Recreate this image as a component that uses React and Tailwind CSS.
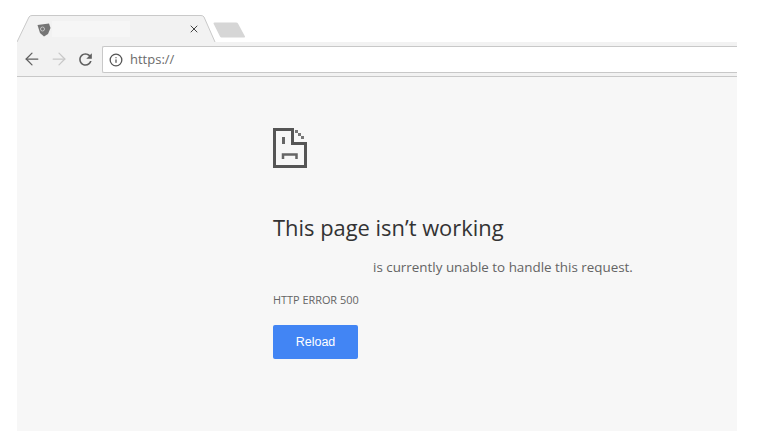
import { ArrowLeft, ArrowRight, Info, X } from 'lucide-react'

const Tabs = () => {
  return (
    <div className="relative h-[42px]">
      {/* Tab outline */}
      <svg className="absolute left-0 top-[14px]" width="200" height="29" viewBox="0 0 200 29" fill="none">
        <path d="M0 28 L12 3 Q13 1.5 15 1.5 L184 1.5 Q186 1.5 187 3 L198 28 Z" fill="#f2f2f2" />
        <path d="M0 28 L12 3 Q13 1.5 15 1.5 L184 1.5 Q186 1.5 187 3 L198 28" stroke="#c9c9c9" />
      </svg>
      {/* Favicon */}
      <svg className="absolute left-[20px] top-[23px]" width="14" height="14" viewBox="0 0 14 14">
        <path d="M0.5 2 L12 0.5 L13.5 5 L11 11 L7 13.5 L3 10 Z" fill="#757575" />
        <circle cx="5.5" cy="6" r="2" fill="none" stroke="#c4c4c4" />
      </svg>
      <div className="absolute left-[35px] top-[21px] h-[16px] w-[78px] bg-[#f6f6f6]"></div>
      <X className="absolute left-[171px] top-[23px] h-[12px] w-[12px] text-[#444444]" strokeWidth={2} />
      {/* New tab button */}
      <svg className="absolute left-[196px] top-[22px]" width="33" height="16" viewBox="0 0 33 16">
        <path d="M0.5 1.5 Q0.5 0.5 1.5 0.5 L23 0.5 Q24.5 0.5 25 1.5 L32 14.5 Q32.5 15.5 31 15.5 L8.5 15.5 Q7.5 15.5 7 14.5 Z" fill="#d6d6d6" />
      </svg>
    </div>
  )
}

const Toolbar = () => {
  return (
    <div className="flex h-[35px] items-start border-b border-[#c8c8c8] bg-[#f2f2f2] pt-[4px]">
      <div className="flex h-[26px] w-[85px] shrink-0 items-center">
        <ArrowLeft className="ml-[5px] h-[20px] w-[20px] text-[#5f5f5f]" strokeWidth={1.5} />
        <ArrowRight className="ml-[7px] h-[20px] w-[20px] text-[#c8c8c8]" strokeWidth={1.5} />
        <svg className="ml-[7px] h-[19px] w-[19px] text-[#5f5f5f]" viewBox="0 0 24 24" fill="currentColor">
          <path d="M17.65 6.35C16.2 4.9 14.21 4 12 4c-4.42 0-7.99 3.58-7.99 8s3.57 8 7.99 8c3.73 0 6.84-2.55 7.73-6h-2.08c-.82 2.33-3.04 4-5.65 4-3.31 0-6-2.69-6-6s2.69-6 6-6c1.66 0 3.14.69 4.22 1.78L13 11h7V4l-2.35 2.35z" />
        </svg>
      </div>
      <div className="flex h-[27px] flex-1 items-center rounded-l-[2px] border-y border-l border-[#c8c8c8] bg-white pl-[6px]">
        <Info className="h-[14px] w-[14px] text-[#555555]" strokeWidth={2.2} />
        <span className="ml-[7px] text-[13px] text-[#6b6b6b]">https://</span>
      </div>
    </div>
  )
}

const SadPage = () => {
  return (
    <svg width="34" height="40" viewBox="0 0 34 40" fill="none" className="block">
      <path d="M32.5 15 V38.5 H1.5 V1.5 H18" stroke="#555555" strokeWidth="3" />
      <path d="M19.5 0 V15.5 H34" stroke="#555555" strokeWidth="3" />
      <rect x="22" y="2" width="3" height="3" fill="#777777" />
      <rect x="25" y="5" width="3" height="3" fill="#777777" />
      <rect x="28" y="8" width="3" height="3" fill="#777777" />
      <rect x="9" y="9" width="3" height="7" fill="#666666" />
      <path d="M10 31 V26.5 H23.5 V31" stroke="#666666" strokeWidth="2.5" />
    </svg>
  )
}

export default function App() {
  return (
    <div className="h-[431px] w-[760px] overflow-hidden bg-white font-['Open_Sans',sans-serif]">
      <div className="ml-[17px] flex h-full w-[720px] flex-col">
        <Tabs />
        <Toolbar />
        <main className="flex-1 bg-[#f7f7f7] pl-[256px] pt-[51px]">
          <SadPage />
          <h1 className="mt-[45px] text-[21.9px] leading-[30px] text-[#333333]">This page isn’t working</h1>
          <p className="mt-[14px] pl-[100px] text-[13.4px] leading-[20px] text-[#646464]">is currently unable to handle this request.</p>
          <p className="mt-[16px] text-[10.9px] leading-[14px] text-[#646464]">HTTP ERROR 500</p>
          <button className="mt-[18px] block h-[34px] w-[85px] rounded-[2px] bg-[#4285f4] font-['Liberation_Sans',sans-serif] text-[12.5px] text-white">Reload</button>
        </main>
      </div>
    </div>
  )
}
